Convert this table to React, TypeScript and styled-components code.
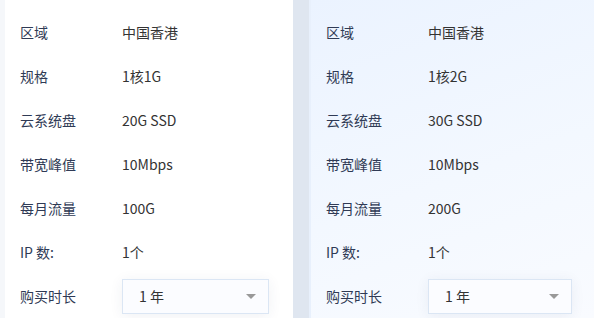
import React from "react";
import styled, { createGlobalStyle } from "styled-components";

const Global = createGlobalStyle`
  html, body { margin: 0; padding: 0; background: #f5f7fa; overflow: hidden; }
  body { font-family: "Noto Sans CJK SC", "Noto Sans", sans-serif; }
`;

const Board = styled.div`
  display: flex;
  gap: 16px;
  margin-left: 5px;
  height: 318px;
  background: #dfe6f0;
  overflow: hidden;
`;

const Card = styled.div<{ $active?: boolean }>`
  box-sizing: border-box;
  flex: ${(p) => (p.$active ? "1 1 auto" : "0 0 288px")};
  min-width: 0;
  padding: 10px 15px 0;
  background: ${(p) =>
    p.$active
      ? "linear-gradient(160deg, #ebf3ff 0%, #f3f8ff 55%, #f9fbff 100%)"
      : "#ffffff"};
  border-left: ${(p) => (p.$active ? "2px solid #e8f0fc" : "none")};
`;

const Row = styled.div`
  display: flex;
  align-items: center;
  height: 44px;
  font-size: 14px;
`;

const Label = styled.div`
  width: 102px;
  flex: 0 0 102px;
  color: #2f3a55;
`;

const Value = styled.div`
  color: #333333;
`;

const Select = styled.div<{ $w: number }>`
  box-sizing: border-box;
  display: flex;
  align-items: center;
  justify-content: space-between;
  width: ${(p) => p.$w}px;
  height: 35px;
  padding: 0 12px 0 16px;
  background: #fbfcff;
  border: 1px solid #dbe6f4;
  box-shadow: 0 2px 14px rgba(40, 60, 100, 0.07);
  color: #333333;
  font-size: 14px;
`;

const Caret = styled.span`
  width: 0;
  height: 0;
  border-left: 5px solid transparent;
  border-right: 5px solid transparent;
  border-top: 5px solid #999999;
`;

type Plan = { spec: string; disk: string; traffic: string; active?: boolean };

const plans: Plan[] = [
  { spec: "1核1G", disk: "20G SSD", traffic: "100G" },
  { spec: "1核2G", disk: "30G SSD", traffic: "200G", active: true },
];

export default function App() {
  return (
    <>
      <Global />
      <Board>
        {plans.map((p, i) => (
          <Card key={i} $active={p.active}>
            <Row><Label>区域</Label><Value>中国香港</Value></Row>
            <Row><Label>规格</Label><Value>{p.spec}</Value></Row>
            <Row><Label>云系统盘</Label><Value>{p.disk}</Value></Row>
            <Row><Label>带宽峰值</Label><Value>10Mbps</Value></Row>
            <Row><Label>每月流量</Label><Value>{p.traffic}</Value></Row>
            <Row><Label>IP 数:</Label><Value>1个</Value></Row>
            <Row>
              <Label>购买时长</Label>
              <Select $w={p.active ? 144 : 147}>
                <span>1 年</span>
                <Caret />
              </Select>
            </Row>
          </Card>
        ))}
      </Board>
    </>
  );
}
